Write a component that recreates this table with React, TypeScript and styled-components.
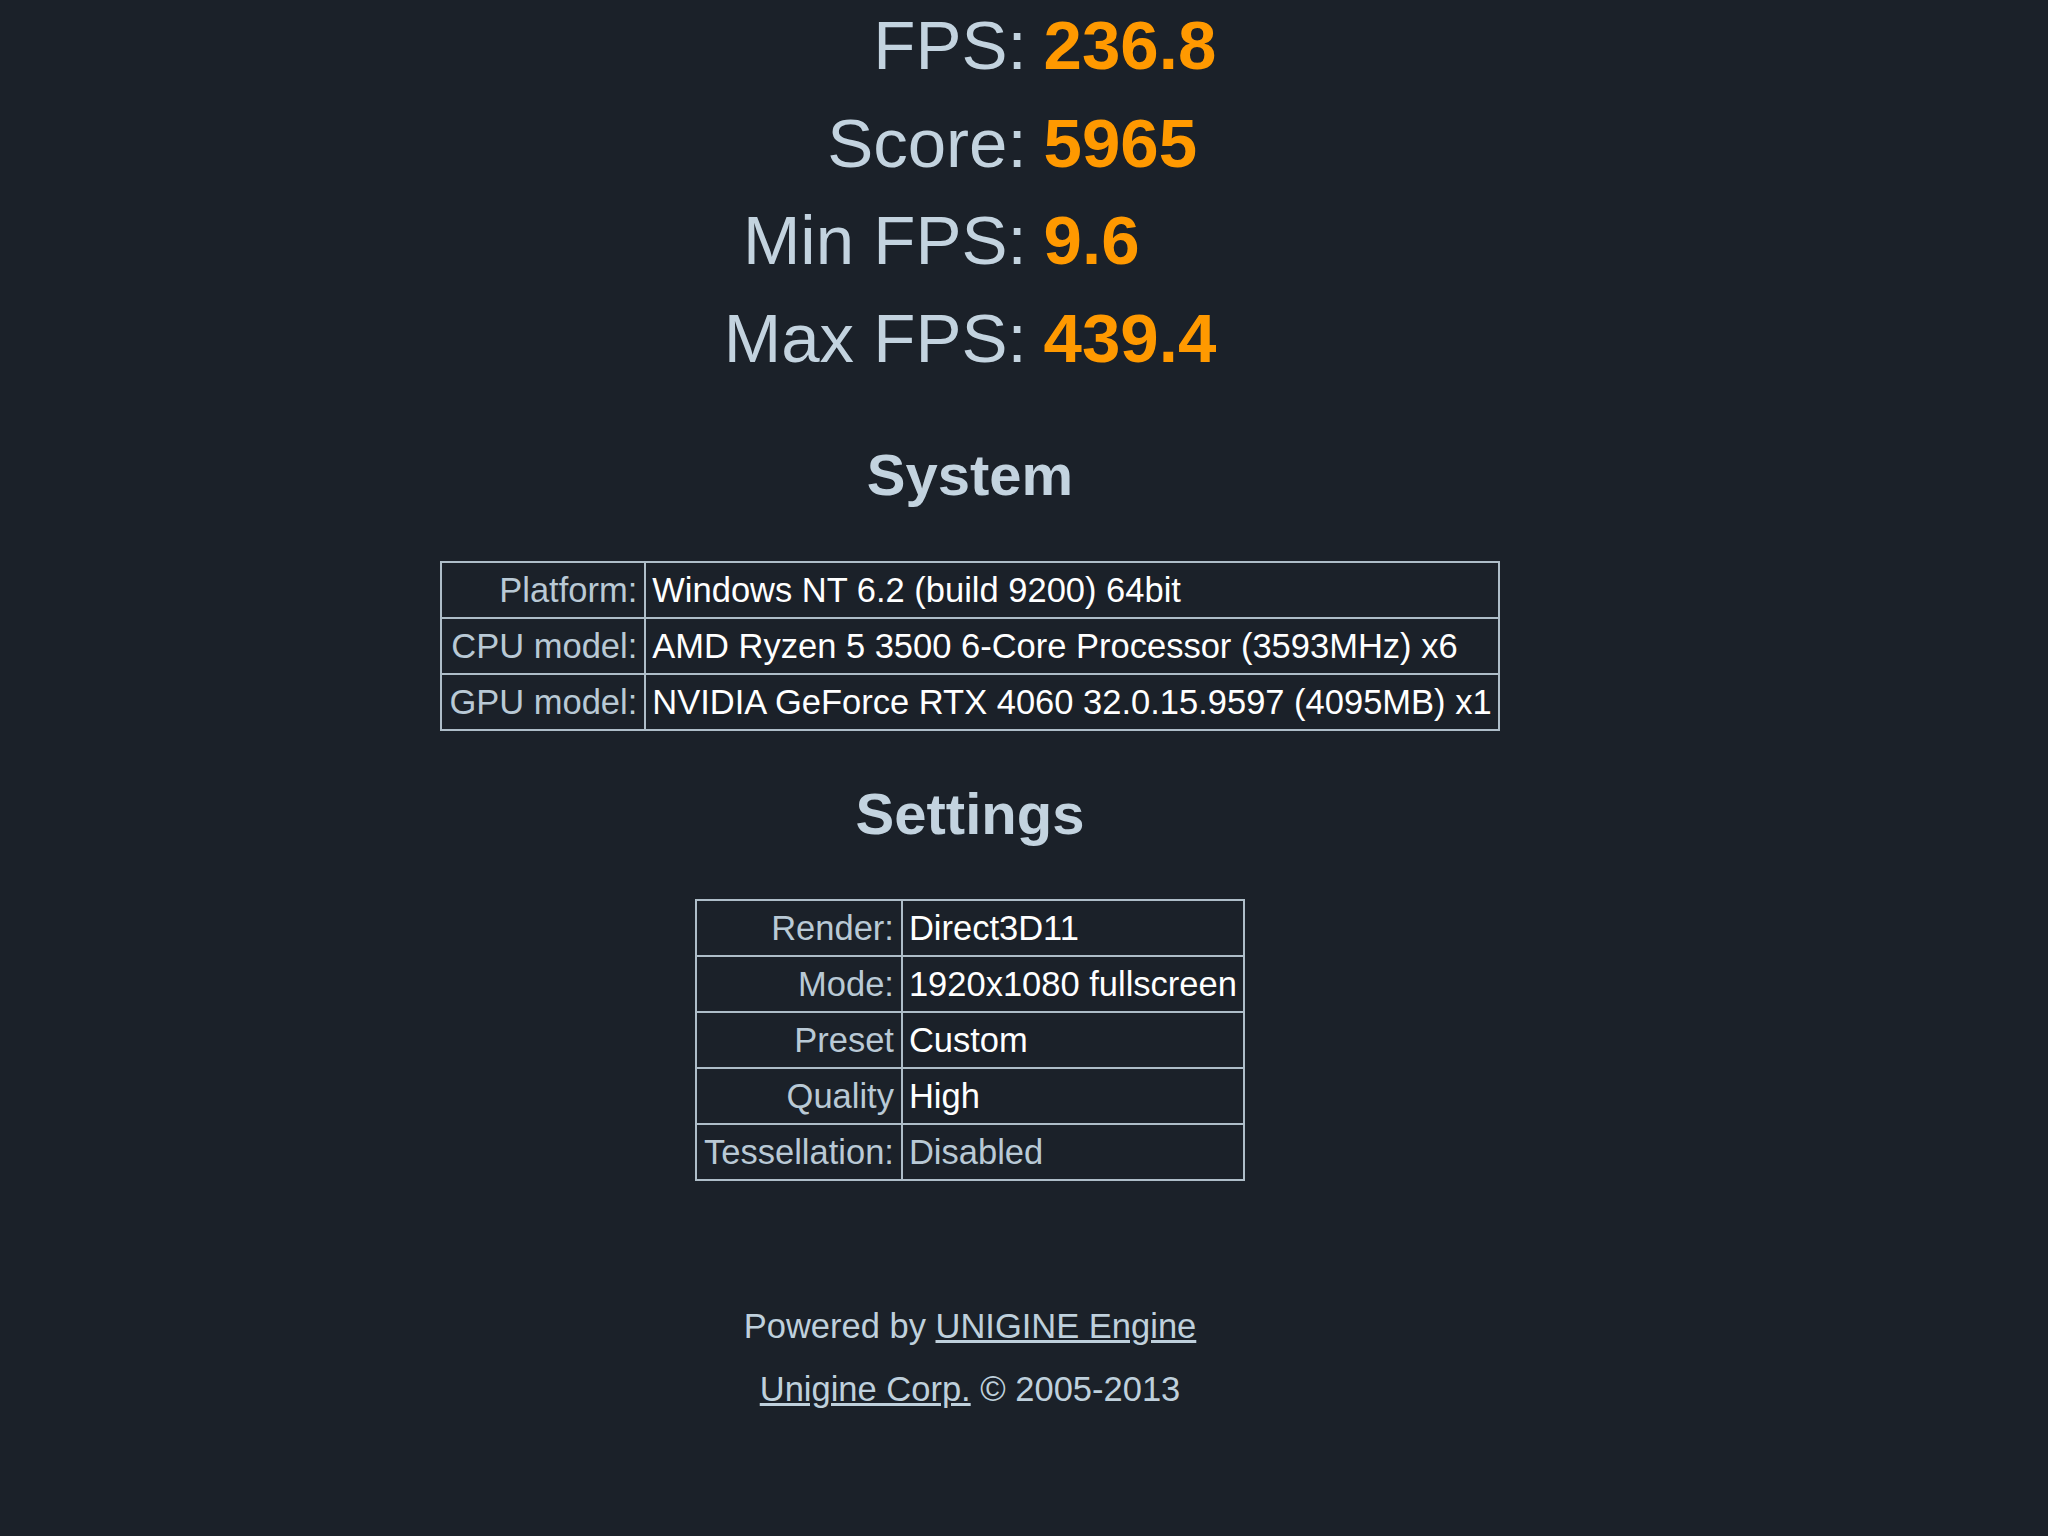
import React from "react";
import styled, { createGlobalStyle } from "styled-components";

const GlobalStyle = createGlobalStyle`
  html, body {
    margin: 0;
    padding: 0;
    background: #1b2129;
  }
  body {
    font-family: "Liberation Sans", Arial, sans-serif;
    min-height: 1536px;
  }
`;

const Page = styled.main`
  width: 1940px;
  display: flex;
  flex-direction: column;
  align-items: center;
  color: #bfd0dc;
  font-size: 34.5px;
`;

const Stats = styled.div`
  display: grid;
  grid-template-columns: auto auto;
  column-gap: 17px;
  margin-top: -3px;
  font-size: 69px;
  line-height: 97.5px;
`;

const StatLabel = styled.div`
  text-align: right;
  color: #c3d3df;
  white-space: nowrap;
`;

const StatValue = styled.div`
  text-align: left;
  font-weight: bold;
  color: #ff9900;
  white-space: nowrap;
`;

const Heading = styled.h2<{ $top: number }>`
  margin: ${(p) => p.$top}px 0 0;
  font-size: 58px;
  line-height: 66px;
  font-weight: bold;
  color: #c3d3df;
`;

const InfoTable = styled.table<{ $top: number }>`
  margin-top: ${(p) => p.$top}px;
  border-collapse: collapse;
  border: 2px solid #aebdc8;
`;

const LabelCell = styled.td`
  border: 2px solid #aebdc8;
  padding: 7px 7px;
  line-height: 40px;
  text-align: right;
  color: #b9c9d5;
  white-space: nowrap;
`;

const ValueCell = styled.td<{ $dim?: boolean }>`
  border: 2px solid #aebdc8;
  padding: 7px 6px 7px 6px;
  line-height: 40px;
  text-align: left;
  color: ${(p) => (p.$dim ? "#b9c9d5" : "#ffffff")};
  white-space: nowrap;
`;

const Footer = styled.footer`
  margin-top: 114px;
  display: flex;
  flex-direction: column;
  align-items: center;
  line-height: 63px;
  color: #bfd0dc;
`;

const FooterLine = styled.div`
  white-space: nowrap;
`;

const Link = styled.a`
  color: inherit;
  text-decoration: underline;
`;

const stats = [
  { label: "FPS:", value: "236.8" },
  { label: "Score:", value: "5965" },
  { label: "Min FPS:", value: "9.6" },
  { label: "Max FPS:", value: "439.4" },
];

const system = [
  { label: "Platform:", value: "Windows NT 6.2 (build 9200) 64bit" },
  { label: "CPU model:", value: "AMD Ryzen 5 3500 6-Core Processor (3593MHz) x6" },
  { label: "GPU model:", value: "NVIDIA GeForce RTX 4060 32.0.15.9597 (4095MB) x1" },
];

const settings = [
  { label: "Render:", value: "Direct3D11" },
  { label: "Mode:", value: "1920x1080 fullscreen" },
  { label: "Preset", value: "Custom" },
  { label: "Quality", value: "High" },
  { label: "Tessellation:", value: "Disabled", dim: true },
];

type Row = { label: string; value: string; dim?: boolean };

function Info({ rows, top }: { rows: Row[]; top: number }) {
  return (
    <InfoTable $top={top}>
      <tbody>
        {rows.map((r) => (
          <tr key={r.label}>
            <LabelCell>{r.label}</LabelCell>
            <ValueCell $dim={r.dim}>{r.value}</ValueCell>
          </tr>
        ))}
      </tbody>
    </InfoTable>
  );
}

export default function App() {
  return (
    <>
      <GlobalStyle />
      <Page>
        <Stats>
          {stats.map((s) => (
            <React.Fragment key={s.label}>
              <StatLabel>{s.label}</StatLabel>
              <StatValue>{s.value}</StatValue>
            </React.Fragment>
          ))}
        </Stats>
        <Heading $top={55}>System</Heading>
        <Info rows={system} top={53} />
        <Heading $top={50}>Settings</Heading>
        <Info rows={settings} top={52} />
        <Footer>
          <FooterLine>
            Powered by <Link href="#">UNIGINE Engine</Link>
          </FooterLine>
          <FooterLine>
            <Link href="#">Unigine Corp.</Link> © 2005-2013
          </FooterLine>
        </Footer>
      </Page>
    </>
  );
}
